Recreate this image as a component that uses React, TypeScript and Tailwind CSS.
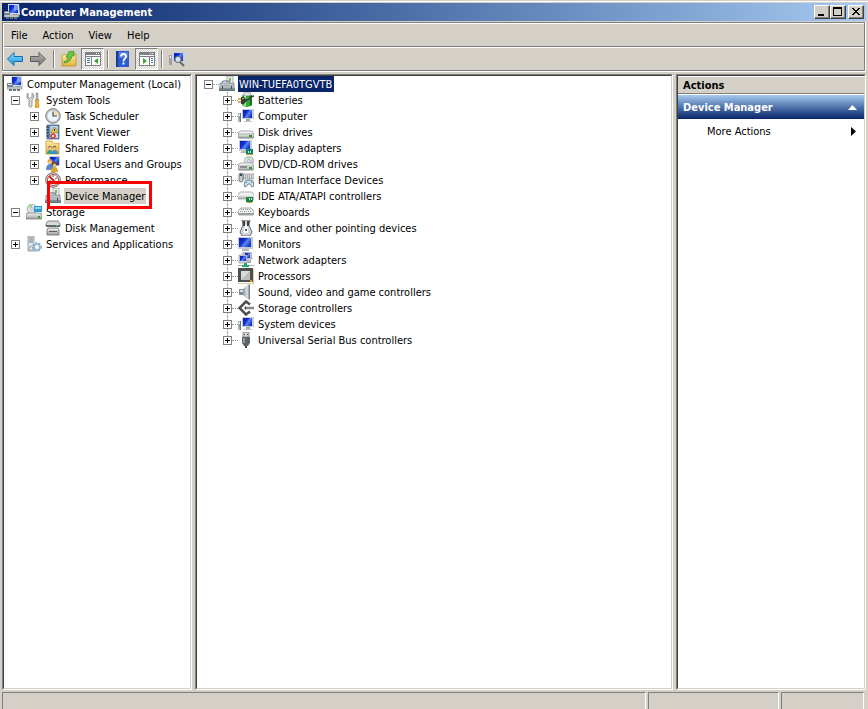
import { ReactNode } from "react";

interface TreeNode {
  id: string;
  label: string;
  icon: ReactNode;
  state?: "open" | "closed";
}

const svgProps = { width: 16, height: 16, viewBox: "0 0 16 16", "aria-hidden": true } as const;

function Gradients() {
  return (
    <svg width="0" height="0" className="absolute" aria-hidden>
      <defs>
        <linearGradient id="screen" x1="0" y1="0" x2="1" y2="0.6">
          <stop offset="0" stopColor="#0a1ba8" />
          <stop offset="0.45" stopColor="#1230d8" />
          <stop offset="0.65" stopColor="#5a86f0" />
          <stop offset="1" stopColor="#1638c8" />
        </linearGradient>
        <linearGradient id="metal" x1="0" y1="0" x2="0" y2="1">
          <stop offset="0" stopColor="#f4f4f4" />
          <stop offset="1" stopColor="#9b9ea0" />
        </linearGradient>
        <linearGradient id="darkMetal" x1="0" y1="0" x2="0" y2="1">
          <stop offset="0" stopColor="#a9b3ba" />
          <stop offset="1" stopColor="#5c6b75" />
        </linearGradient>
        <linearGradient id="arrowBlue" x1="0" y1="0" x2="0" y2="1">
          <stop offset="0" stopColor="#8fe0fb" />
          <stop offset="1" stopColor="#1490dc" />
        </linearGradient>
        <linearGradient id="arrowGray" x1="0" y1="0" x2="0" y2="1">
          <stop offset="0" stopColor="#b8b8b8" />
          <stop offset="1" stopColor="#757575" />
        </linearGradient>
        <linearGradient id="folder" x1="0" y1="0" x2="0" y2="1">
          <stop offset="0" stopColor="#fbe9a0" />
          <stop offset="1" stopColor="#e3b341" />
        </linearGradient>
        <linearGradient id="cone" x1="0" y1="0" x2="1" y2="0">
          <stop offset="0" stopColor="#8797a2" />
          <stop offset="0.6" stopColor="#dde3e7" />
          <stop offset="1" stopColor="#5f6e78" />
        </linearGradient>
      </defs>
    </svg>
  );
}

function ManagementIcon() {
  return (
    <svg {...svgProps}>
      <path d="M4 0h11l1 11H4z" fill="#d9dce0" />
      <path d="M5 1h9v8H5z" fill="url(#screen)" />
      <path d="M10 1h4v5l-4 1z" fill="#9db8f6" opacity=".6" />
      <path d="M9 10h5l1 2H8z" fill="#a4a9ae" />
      <path d="M0 7h6v4H0z" fill="#77838c" />
      <path d="M1 8h4v1H1z" fill="#e5ebee" />
      <path d="M0 11h15v2H0z" fill="#d8dcdf" stroke="#7b858c" strokeWidth=".6" />
      <path d="M2 13h3v2H2zM6 13h3v2H6zM10 13h3v2h-3z" fill="#67737b" />
    </svg>
  );
}

function ComputerIcon() {
  return (
    <svg {...svgProps}>
      <path d="M4 1h12v10H4z" fill="#c9cdd4" />
      <path d="M5 2h9v8H5z" fill="url(#screen)" />
      <path d="M8 11h4v2H8z" fill="#a7abb0" />
      <path d="M6 13h8v1H6z" fill="#c4c7ca" />
      <path d="M0 5h3v9H0z" fill="#aeb3b6" />
      <path d="M1 6h1v2H1z" fill="#fff" />
      <path d="M1 9h1v2H1z" fill="#54b848" />
      <path d="M2 5h1v9H2z" fill="#70777c" />
    </svg>
  );
}

function MonitorIcon() {
  return (
    <svg {...svgProps}>
      <path d="M0 1h15v12H0z" fill="#c6cad2" />
      <path d="M1 2h12v9H1z" fill="url(#screen)" />
      <path d="M4 13h7v2H4z" fill="#b4b8bd" />
    </svg>
  );
}

function ToolsIcon() {
  return (
    <svg {...svgProps}>
      <path d="M2 1v4l2 1.500L6 5V1l1.500 1.500v3.500L6 8v6.500q-1.500 1.500-3 0V8L1 6V2.500z" fill="#d9dcde" stroke="#7d8387" strokeWidth=".8" />
      <path d="M10 1h2v7h-2z" fill="#b9bdc0" stroke="#777" strokeWidth=".5" />
      <path d="M9 8h4l-1 2 1 5q-2 1.500-4 0l1-5z" fill="#f4b52c" stroke="#c37b10" strokeWidth=".7" />
    </svg>
  );
}

function ClockIcon() {
  return (
    <svg {...svgProps}>
      <circle cx="8" cy="8" r="7.400" fill="#b8bcc0" stroke="#777d82" strokeWidth=".8" />
      <circle cx="8" cy="8" r="5.600" fill="#eef5fb" />
      <path d="M8 8V2.400A5.600 5.600 0 0 1 13.600 8z" fill="#f6dfa6" />
      <path d="M8 3.500V8h4" fill="none" stroke="#34506f" strokeWidth="1.200" />
    </svg>
  );
}

function EventIcon() {
  return (
    <svg {...svgProps}>
      <path d="M2 1h12v14H2z" fill="#5d86b4" stroke="#3f5f86" strokeWidth=".7" />
      <path d="M5 2h8v12H5z" fill="#c5d8ea" />
      <path d="M5 4h8M5 6h8M5 8h8" stroke="#8aa9c8" strokeWidth=".7" />
      <path d="M1 3h3M1 6h3M1 9h3M1 12h3" stroke="#2f3e4f" />
      <path d="M9.500 3l3.500 5.500H6z" fill="#f9d02b" stroke="#a37c06" strokeWidth=".6" />
      <path d="M9 5h1v2H9z" fill="#222" />
      <circle cx="8" cy="12" r="2.800" fill="#d83a32" />
      <path d="M6.800 10.800l2.400 2.400M9.200 10.800l-2.400 2.400" stroke="#fff" strokeWidth=".9" />
    </svg>
  );
}

function SharedFolderIcon() {
  return (
    <svg {...svgProps}>
      <path d="M1 1h6l1 2h6v11H1z" fill="url(#folder)" stroke="#c7982e" strokeWidth=".8" />
      <path d="M8 1h5v2H8z" fill="#fff7cf" />
      <circle cx="5" cy="7.500" r="1.800" fill="#a97448" />
      <circle cx="5" cy="8.300" r="1.200" fill="#f0c79b" />
      <path d="M2 14q0-4 3-4t3 4z" fill="#3aa089" />
      <circle cx="9.500" cy="7.500" r="1.800" fill="#8a5a36" />
      <circle cx="9.500" cy="8.300" r="1.200" fill="#f0c79b" />
      <path d="M7 14q0-4 3-4t3 4z" fill="#3f8fc9" />
    </svg>
  );
}

function UsersIcon() {
  return (
    <svg {...svgProps}>
      <path d="M4 0h11v10H4z" fill="#c9cdd4" />
      <path d="M5 1h9v8H5z" fill="url(#screen)" />
      <circle cx="5" cy="5.500" r="2.500" fill="#d9a441" />
      <circle cx="5" cy="6.500" r="1.600" fill="#f2cc9f" />
      <path d="M1 14q0-6 4-6t4 6z" fill="#5a86d0" />
      <circle cx="9.500" cy="8" r="2.500" fill="#7a4620" />
      <circle cx="9.500" cy="9" r="1.600" fill="#efc08b" />
      <path d="M6 16q0-5 3.500-5t3.500 5z" fill="#e0a32a" />
    </svg>
  );
}

function PerformanceIcon() {
  return (
    <svg {...svgProps}>
      <circle cx="8" cy="8" r="7.300" fill="#d8d8d8" stroke="#6d6d6d" />
      <circle cx="8" cy="8" r="5.500" fill="#fff" stroke="#b33" strokeWidth=".9" />
      <path d="M4 4l8 8" stroke="#d3261c" strokeWidth="2" />
      <path d="M8 3v2M12 6l-2 1M4 9h2" stroke="#555" />
    </svg>
  );
}

function DeviceManagerIcon() {
  return (
    <svg {...svgProps}>
      <path d="M8 0h6v8H8z" fill="#eef0f0" stroke="#9a9fa2" strokeWidth=".8" />
      <path d="M10 2h2v3h-2z" fill="#6cb55d" />
      <path d="M3 7q0-2 2-2h4q2 0 2 2" fill="none" stroke="#59646c" />
      <path d="M1 7h14v3H1z" fill="#bfc6cb" stroke="#6c777e" strokeWidth=".6" />
      <path d="M0 10h16v5H0z" fill="url(#darkMetal)" />
      <path d="M0 11h16" stroke="#dce2e5" strokeWidth=".7" />
      <path d="M3 10h1v3H3zM12 10h1v3h-1z" fill="#3f4a52" />
    </svg>
  );
}

function StorageIcon() {
  return (
    <svg {...svgProps}>
      <circle cx="6" cy="5" r="4.800" fill="#dfe5e8" stroke="#8b9296" strokeWidth=".7" />
      <path d="M6 5L2 2q2-2 4-2z" fill="#a9cf9a" />
      <circle cx="6" cy="5" r="1.400" fill="#fff" stroke="#8b9296" strokeWidth=".6" />
      <path d="M8 2h8v6H8z" fill="#2d9bd6" />
      <path d="M9 3h6v2H9z" fill="#85d2f2" />
      <path d="M1 9h14l1 2v4H0v-4z" fill="url(#metal)" stroke="#6a6e71" strokeWidth=".7" />
      <path d="M12 12h2v2h-2z" fill="#1fa31f" />
    </svg>
  );
}

function DiskManagementIcon() {
  return (
    <svg {...svgProps}>
      <path d="M3 1h10l2 3v2H1V4z" fill="#d7dadb" stroke="#666c70" strokeWidth=".8" />
      <path d="M1 5h14v2H1z" fill="#60686c" />
      <path d="M11 5h2v1h-2z" fill="#5bd05b" />
      <path d="M3 8h10l1 2v5H2v-5z" fill="url(#metal)" stroke="#666c70" strokeWidth=".8" />
      <path d="M4 11h8v1H4z" fill="#555c60" />
    </svg>
  );
}

function ServicesIcon() {
  return (
    <svg {...svgProps}>
      <path d="M2 0h6v15H2z" fill="#e0e4e7" stroke="#89939a" strokeWidth=".8" />
      <path d="M3 2h4M3 4h4M3 6h4" stroke="#75818a" />
      <circle cx="11" cy="11" r="3" fill="#eef4f9" stroke="#8fb0cc" strokeWidth="1.500" />
      <circle cx="11" cy="11" r="4.300" fill="none" stroke="#7fa5c6" strokeWidth="1.200" strokeDasharray="1.800 1.800" />
      <circle cx="5" cy="12.500" r="2" fill="#dbe6ee" stroke="#8d9fae" strokeWidth=".9" />
    </svg>
  );
}

function BatteryIcon() {
  return (
    <svg {...svgProps}>
      <ellipse cx="9" cy="2" rx="4" ry="2" fill="#dfe3e4" stroke="#8d9396" strokeWidth=".6" />
      <path d="M4 3q5 2 10 0v10q-5 4-10 0z" fill="#2faa38" />
      <path d="M6 4h2v10H6z" fill="#9be59c" />
      <path d="M12 4l2-1v10l-2 1z" fill="#15701f" />
      <path d="M0 7h3M0 10h3" stroke="#c9a02c" strokeWidth="1.400" />
      <path d="M3 5h3l3 3.500L6 12H3z" fill="#3a3a36" />
      <path d="M8 8q4 0 4-3l4-1" fill="none" stroke="#3a3a36" strokeWidth="1.500" />
      <path d="M4 6h2v1H4z" fill="#d3b34d" />
    </svg>
  );
}

function DriveShape() {
  return (
    <>
      <path d="M2 7h12l2 3v3l-1 1H1l-1-1v-3z" fill="#f1f2f2" stroke="#9a9ea0" strokeWidth=".8" />
      <path d="M0 10h16v3l-1 1H1l-1-1z" fill="url(#metal)" stroke="#85898b" strokeWidth=".7" />
      <path d="M11 11h3v2h-3z" fill="#1fa31f" />
    </>
  );
}

function DiskIcon() {
  return (
    <svg {...svgProps}>
      <DriveShape />
    </svg>
  );
}

function DisplayIcon() {
  return (
    <svg {...svgProps}>
      <path d="M1 0h13v11H1z" fill="#c6cad2" />
      <path d="M2 1h10v8H2z" fill="url(#screen)" />
      <path d="M4 11h5v2H2z" fill="#b4b8bd" />
      <path d="M8 9h7v5H8z" fill="#16816b" />
      <path d="M10 11h1v2h-1zM12 11h1v2h-1z" fill="#bfe6d7" />
      <path d="M8 14h7v1H8z" fill="#c79a2b" />
    </svg>
  );
}

function DvdIcon() {
  return (
    <svg {...svgProps}>
      <circle cx="11" cy="5" r="4.800" fill="#dce1e4" stroke="#9ea5aa" strokeWidth=".7" />
      <path d="M11 5L8 1q3-2 5 0z" fill="#b7dcb5" />
      <path d="M11 5l4-2q1 3-1 5z" fill="#d8bfe0" />
      <circle cx="11" cy="5" r="1.400" fill="#fff" stroke="#8a9196" strokeWidth=".6" />
      <DriveShape />
      <path d="M2 11h7" stroke="#4b5154" />
    </svg>
  );
}

function HidIcon() {
  return (
    <svg {...svgProps}>
      <path d="M4 2h12v5H4z" fill="#d4d7d9" stroke="#8a8f93" strokeWidth=".7" />
      <path d="M5 4h10M5 6h10" stroke="#80868a" strokeDasharray="1 1" />
      <rect x="1" y="1" width="4" height="9" rx="2" fill="#c5cacd" stroke="#596169" strokeWidth=".8" />
      <path d="M2 2h2v2H2z" fill="#3f474d" />
      <path d="M7 9q4-2 8 0l1 5-2 1-2-3h-2l-2 3-2-1z" fill="#d2e0e8" stroke="#4e6d84" strokeWidth=".8" />
      <path d="M8 10h1v1H8zM13 10h1v1h-1z" fill="#2a71b6" />
    </svg>
  );
}

function IdeIcon() {
  return (
    <svg {...svgProps}>
      <path d="M2 4h12l2 3v4H0V7z" fill="#f1f2f2" stroke="#9a9ea0" strokeWidth=".8" />
      <path d="M0 7h16v4H0z" fill="url(#metal)" />
      <path d="M8 9h7v5H8z" fill="#178848" />
      <path d="M11 10h1v2h-1zM13 10h1v2h-1z" fill="#c4efcf" />
      <path d="M9 14h5v1H9z" fill="#c79a2b" />
    </svg>
  );
}

function KeyboardIcon() {
  return (
    <svg {...svgProps}>
      <path d="M3 4h10q3 2 3 5l-1 2H1L0 9q0-3 3-5z" fill="#f1f2f2" stroke="#909497" strokeWidth=".8" />
      <path d="M3 5.500h10M2 7.500h12" stroke="#909497" strokeDasharray="1 1" />
      <path d="M0 9h16l-1 2H1z" fill="#9a9ea1" />
    </svg>
  );
}

function MouseIcon() {
  return (
    <svg {...svgProps}>
      <path d="M4 0h8l-1 5 3 7-2 4H4l-2-4 3-7z" fill="#cfd3d6" stroke="#5a6064" strokeWidth=".9" />
      <path d="M5 1h2v5H5zM9 1h2v5H9z" fill="#3c4246" />
      <path d="M8 4q-3 5-2 9h4q1-4-2-9z" fill="#fff" />
      <path d="M7 9h2v2H7z" fill="#555b60" />
    </svg>
  );
}

function NetworkIcon() {
  return (
    <svg {...svgProps}>
      <path d="M5 0h8l1 7H5z" fill="#c9cdd4" stroke="#7e858c" strokeWidth=".6" />
      <path d="M7 1h5v5H7z" fill="url(#screen)" />
      <path d="M1 3h8v8H1z" fill="#d3d7dc" stroke="#7e858c" strokeWidth=".6" />
      <path d="M2 4h6v5H2z" fill="url(#screen)" />
      <path d="M9 8h4v3H9z" fill="#aab0b5" />
      <path d="M6 11h3v2h2v2H4v-2h2z" fill="#27a56a" />
      <path d="M0 13h4v1H0zM11 13h5v1h-5z" fill="#a9b9b2" />
    </svg>
  );
}

function ProcessorIcon() {
  return (
    <svg {...svgProps}>
      <path d="M.5 15.500h15V1" fill="none" stroke="#c99a3a" strokeDasharray="1 1" />
      <path d="M0 0h15v14H0z" fill="#4d5050" />
      <path d="M3 3h9v9H3z" fill="#b9bdbd" />
      <path d="M3 3h9l-9 9z" fill="#d9dcdc" />
      <path d="M12 12h2v2h-2z" fill="#e09b30" />
    </svg>
  );
}

function SoundIcon() {
  return (
    <svg {...svgProps}>
      <path d="M1 5h4v6H1z" fill="#7b8992" />
      <path d="M5 5l5-4.500h2v15h-2L5 11z" fill="url(#cone)" />
      <path d="M2 6h3v2H2z" fill="#dbe2e6" />
    </svg>
  );
}

function StorageControllerIcon() {
  return (
    <svg {...svgProps}>
      <path d="M12 4.500L8 1.500 1.500 8 8 14.500l4-3" fill="none" stroke="#4b4e50" strokeWidth="2.500" />
      <path d="M7 8h9" stroke="#85898c" strokeWidth="2.500" />
      <path d="M8 6l-2 2 2 2z" fill="#4b4e50" />
    </svg>
  );
}

function UsbIcon() {
  return (
    <svg {...svgProps}>
      <path d="M5 0h6v5H5z" fill="#d4d6d8" stroke="#777c80" strokeWidth=".8" />
      <path d="M6 2h1v1H6zM9 2h1v1H9z" fill="#444" />
      <path d="M4 5h8v6l-2 3H6l-2-3z" fill="#5d6367" />
      <path d="M5 6h2v5H5z" fill="#92989c" />
      <path d="M7 14h2v2H7z" fill="#3c4144" />
    </svg>
  );
}

function ArrowIcon({ forward = false }: { forward?: boolean }) {
  return (
    <svg {...svgProps}>
      <path
        d={forward ? "M15.500 8L9 1.500v4H.5v5H9v4z" : "M.5 8L7 1.500v4h8.500v5H7v4z"}
        fill={forward ? "url(#arrowGray)" : "url(#arrowBlue)"}
        stroke={forward ? "#5e5e5e" : "#1b6eae"}
      />
    </svg>
  );
}

function UpFolderIcon() {
  return (
    <svg {...svgProps}>
      <path d="M1 4h6l1-1h7v12H1z" fill="url(#folder)" stroke="#bd942f" strokeWidth=".8" />
      <path d="M2 5h12" stroke="#fff3bd" />
      <path d="M3 11q4-1 4-5H5l3-5.500h5V5h-2q-1 6-8 7z" fill="#6cc644" stroke="#2c8416" strokeWidth=".6" />
    </svg>
  );
}

function PaneIcon({ right = false }: { right?: boolean }) {
  return (
    <svg {...svgProps} shapeRendering="crispEdges">
      <path d="M0 1h16v14H0z" fill="#7c8186" />
      <path d="M1 4h14v1H1zM1 6h14v8H1z" fill="#fff" />
      <path d="M11 2h1v1h-1zM13 2h1v1h-1z" fill="#fff" />
      <path d={right ? "M10 6h1v8h-1z" : "M6 6h1v8H6z"} fill="#7c8186" />
      <path
        d={right ? "M12 7h2v1h-2zM12 9h2v1h-2zM12 11h2v1h-2z" : "M2 7h3v1H2zM2 9h3v1H2zM2 11h3v1H2z"}
        fill="#3b77b8"
      />
      <path d={right ? "M4 7l4 3-4 3z" : "M13 7l-4 3 4 3z"} fill="#37a72c" shapeRendering="auto" />
    </svg>
  );
}

function HelpIcon() {
  return (
    <svg {...svgProps}>
      <path d="M1 0h13v16H1z" fill="#2c5bd0" />
      <path d="M1 0h2v16H1z" fill="#173a93" />
      <path d="M4 1h9v6H4z" fill="#517fe4" />
      <path d="M6 5.500Q6 3 8.500 3T11 5.500Q11 7 9.500 8q-1 .6-1 2.500" fill="none" stroke="#fff" strokeWidth="1.800" />
      <path d="M7.500 11.500h2v2h-2z" fill="#fff" />
    </svg>
  );
}

function ScanIcon() {
  return (
    <svg {...svgProps}>
      <path d="M4 1h12v10H4z" fill="#c9cdd4" />
      <path d="M5 2h9v8H5z" fill="url(#screen)" />
      <path d="M0 4h3v10H0z" fill="#9ba1a5" />
      <path d="M1 5h1v2H1z" fill="#fff" />
      <circle cx="9" cy="8.500" r="3" fill="#d6e6f4" stroke="#71777c" strokeWidth="1.200" />
      <path d="M11 11l4 4" stroke="#62676b" strokeWidth="2" />
    </svg>
  );
}

const CONSOLE_TREE: (TreeNode & { depth: 0 | 1 | 2 })[] = [
  { id: "root", depth: 0, label: "Computer Management (Local)", icon: <ManagementIcon /> },
  { id: "tools", depth: 1, label: "System Tools", icon: <ToolsIcon />, state: "open" },
  { id: "tasks", depth: 2, label: "Task Scheduler", icon: <ClockIcon />, state: "closed" },
  { id: "events", depth: 2, label: "Event Viewer", icon: <EventIcon />, state: "closed" },
  { id: "shared", depth: 2, label: "Shared Folders", icon: <SharedFolderIcon />, state: "closed" },
  { id: "users", depth: 2, label: "Local Users and Groups", icon: <UsersIcon />, state: "closed" },
  { id: "perf", depth: 2, label: "Performance", icon: <PerformanceIcon />, state: "closed" },
  { id: "devices", depth: 2, label: "Device Manager", icon: <DeviceManagerIcon /> },
  { id: "storage", depth: 1, label: "Storage", icon: <StorageIcon />, state: "open" },
  { id: "disks", depth: 2, label: "Disk Management", icon: <DiskManagementIcon /> },
  { id: "services", depth: 1, label: "Services and Applications", icon: <ServicesIcon />, state: "closed" },
];

const DEVICES: TreeNode[] = [
  { id: "batteries", label: "Batteries", icon: <BatteryIcon /> },
  { id: "computer", label: "Computer", icon: <ComputerIcon /> },
  { id: "disk", label: "Disk drives", icon: <DiskIcon /> },
  { id: "display", label: "Display adapters", icon: <DisplayIcon /> },
  { id: "dvd", label: "DVD/CD-ROM drives", icon: <DvdIcon /> },
  { id: "hid", label: "Human Interface Devices", icon: <HidIcon /> },
  { id: "ide", label: "IDE ATA/ATAPI controllers", icon: <IdeIcon /> },
  { id: "keyboards", label: "Keyboards", icon: <KeyboardIcon /> },
  { id: "mice", label: "Mice and other pointing devices", icon: <MouseIcon /> },
  { id: "monitors", label: "Monitors", icon: <MonitorIcon /> },
  { id: "network", label: "Network adapters", icon: <NetworkIcon /> },
  { id: "processors", label: "Processors", icon: <ProcessorIcon /> },
  { id: "sound", label: "Sound, video and game controllers", icon: <SoundIcon /> },
  { id: "storagectl", label: "Storage controllers", icon: <StorageControllerIcon /> },
  { id: "system", label: "System devices", icon: <ComputerIcon /> },
  { id: "usb", label: "Universal Serial Bus controllers", icon: <UsbIcon /> },
];

const DEPTH_PADDING = {
  0: "pl-[3px]",
  1: "pl-[7px]",
  2: "pl-[26px]",
};

function Expander({ state, label }: { state: "open" | "closed"; label: string }) {
  return (
    <button type="button" aria-label={label} aria-expanded={state === "open"} className="block h-[9px] w-[9px] shrink-0">
      <svg width="9" height="9" viewBox="0 0 9 9" shapeRendering="crispEdges" aria-hidden>
        <path d="M0 0h9v9H0z" fill="#808080" />
        <path d="M1 1h7v7H1z" fill="#fff" />
        <path d={state === "open" ? "M2 4h5v1H2z" : "M2 4h5v1H2zM4 2h1v5H4z"} fill="#000" />
      </svg>
    </button>
  );
}

function ConsoleTree() {
  return (
    <ul>
      {CONSOLE_TREE.map((node) => (
        <li key={node.id} className={`relative flex h-4 items-center ${DEPTH_PADDING[node.depth]}`}>
          {node.depth > 0 && (
            <span className="mr-[6px] w-[9px] shrink-0">
              {node.state && <Expander state={node.state} label={node.label} />}
            </span>
          )}
          <button type="button" className="flex h-4 items-center gap-[3px]">
            {node.icon}
            <span className={`h-4 px-px leading-[18px] ${node.id === "devices" ? "bg-[#d4d0c8]" : ""}`}>
              {node.label}
            </span>
          </button>
          {node.id === "devices" && (
            <span className="pointer-events-none absolute -top-[7px] left-[43px] z-10 h-7 w-[105px] border-[3px] border-[#ff0000]" />
          )}
        </li>
      ))}
    </ul>
  );
}

function DeviceTree() {
  return (
    <div>
      <div className="flex h-4 items-center pl-[7px]">
        <Expander state="open" label="WIN-TUEFA0TGVTB" />
        <span className="w-[6px] border-t border-dotted border-[#a0a0a0]" />
        <button type="button" className="flex h-4 items-center gap-[3px]">
          <DeviceManagerIcon />
          <span className="h-4 bg-[#0a246a] px-px pr-[2px] leading-[18px] text-white">WIN-TUEFA0TGVTB</span>
        </button>
      </div>
      <ul>
        {DEVICES.map((device, i) => (
          <li key={device.id} className="flex h-4 items-center pl-[26px]">
            <span className="flex h-4 w-[9px] flex-col items-center">
              <span className="h-1 border-l border-dotted border-[#a0a0a0]" />
              <Expander state="closed" label={device.label} />
              {i < DEVICES.length - 1 && <span className="h-[3px] border-l border-dotted border-[#a0a0a0]" />}
            </span>
            <span className="w-[6px] border-t border-dotted border-[#a0a0a0]" />
            <button type="button" className="flex h-4 items-center gap-[3px]">
              {device.icon}
              <span className="h-4 px-px leading-[18px]">{device.label}</span>
            </button>
          </li>
        ))}
      </ul>
    </div>
  );
}

function CaptionButton({ label, children }: { label: string; children: ReactNode }) {
  return (
    <button
      type="button"
      aria-label={label}
      className="h-[14px] w-4 border border-t-white border-r-[#404040] border-b-[#404040] border-l-white bg-[#d4d0c8]"
    >
      <svg width="14" height="12" viewBox="0 0 14 12" shapeRendering="crispEdges" aria-hidden>
        <path d="M13.500 0v11.500H0" fill="none" stroke="#808080" />
        {children}
      </svg>
    </button>
  );
}

function ToolButton({ label, pressed = false, children }: { label: string; pressed?: boolean; children: ReactNode }) {
  return (
    <button
      type="button"
      aria-label={label}
      className={`flex h-[22px] w-[23px] items-center pl-[3px] ${
        pressed
          ? "border border-t-[#808080] border-r-white border-b-white border-l-[#808080] bg-[repeating-conic-gradient(#fff_0_25%,#d4d0c8_0_50%)] bg-[length:2px_2px]"
          : ""
      }`}
    >
      {children}
    </button>
  );
}

function ToolSeparator() {
  return (
    <span className="flex w-2 justify-center">
      <span className="h-[18px] w-[2px] border-l border-r border-l-[#808080] border-r-white" />
    </span>
  );
}

function Panel({ className, children }: { className: string; children: ReactNode }) {
  return (
    <div className={`border border-t-[#808080] border-r-white border-b-white border-l-[#808080] ${className}`}>
      <div className="h-full border border-t-[#404040] border-r-[#d4d0c8] border-b-[#d4d0c8] border-l-[#404040] bg-white">
        {children}
      </div>
    </div>
  );
}

export default function App() {
  return (
    <div className="flex h-screen flex-col overflow-hidden bg-[#d4d0c8] font-['Tahoma','DejaVu_Sans_Condensed','DejaVu_Sans',sans-serif] text-[11px] leading-4 whitespace-nowrap text-black">
      <Gradients />
      <div className="mt-px h-[2px] border-t border-white" />

      <header className="mx-[2px]">
        <div className="flex h-[18px] items-center bg-linear-to-r from-[#0a246a] to-[#a6caf0] pr-[2px] pl-[2px]">
          <ManagementIcon />
          <h1 className="ml-px flex-1 pt-[2px] font-bold text-white">Computer Management</h1>
          <div className="flex">
            <CaptionButton label="Minimize">
              <path d="M3 8h6v2H3z" />
            </CaptionButton>
            <CaptionButton label="Maximize">
              <path d="M2 1h9v9H2zM3 3v6h7V3z" fillRule="evenodd" />
            </CaptionButton>
            <span className="w-[2px]" />
            <CaptionButton label="Close">
              <path d="M3 2h2v1h1v1h2V3h1V2h2v1h-1v1H9v1H8v1h1v1h1v1h1v1H9V8H8V7H6v1H5v1H3V8h1V7h1V6h1V5H5V4H4V3H3z" />
            </CaptionButton>
          </div>
        </div>

        <div className="mt-px border-r border-b border-white">
          <div className="border border-[#808080]">
            <div className="border-t border-l border-white">
              <nav className="flex h-[23px] items-center gap-px border-b border-[#808080] pt-[2px]">
                <button type="button" className="px-[7px]">File</button>
                <button type="button" className="px-[7px]">Action</button>
                <button type="button" className="px-[7px]">View</button>
                <button type="button" className="px-[7px]">Help</button>
              </nav>
              <div className="flex items-center border-t border-white">
                <ToolButton label="Back"><ArrowIcon /></ToolButton>
                <ToolButton label="Forward"><ArrowIcon forward /></ToolButton>
                <ToolSeparator />
                <ToolButton label="Up one level"><UpFolderIcon /></ToolButton>
                <ToolButton label="Show/Hide Console Tree" pressed><PaneIcon /></ToolButton>
                <ToolSeparator />
                <ToolButton label="Help"><HelpIcon /></ToolButton>
                <ToolButton label="Show/Hide Action Pane" pressed><PaneIcon right /></ToolButton>
                <ToolSeparator />
                <ToolButton label="Scan for hardware changes"><ScanIcon /></ToolButton>
              </div>
            </div>
          </div>
        </div>
      </header>

      <main className="mx-[2px] my-[2px] flex min-h-0 flex-1 gap-[3px]">
        <Panel className="w-[190px] shrink-0">
          <ConsoleTree />
        </Panel>
        <Panel className="min-w-0 flex-1">
          <DeviceTree />
        </Panel>
        <Panel className="w-[190px] shrink-0">
          <h2 className="flex h-[18px] items-center border-t border-b border-t-white border-b-[#808080] bg-[#d4d0c8] pt-[2px] pl-[5px] font-bold">
            Actions
          </h2>
          <button
            type="button"
            className="flex h-[25px] w-full items-center justify-between border-t border-white bg-linear-to-b from-[#a6caf0] to-[#0a246a] pr-[7px] pl-[5px] font-bold text-white"
          >
            <span className="pt-[2px]">Device Manager</span>
            <svg width="9" height="5" viewBox="0 0 9 5" aria-hidden>
              <path d="M4.500 0L9 5H0z" fill="#fff" />
            </svg>
          </button>
          <button type="button" className="flex h-6 w-full items-center justify-between pr-2 pl-[29px]">
            <span className="pt-[2px]">More Actions</span>
            <svg width="5" height="9" viewBox="0 0 5 9" aria-hidden>
              <path d="M0 0l5 4.500L0 9z" />
            </svg>
          </button>
        </Panel>
      </main>

      <footer className="mr-1 ml-[2px] flex h-[17px] gap-[2px]">
        <div className="flex-1 border-t border-r border-l border-t-[#808080] border-r-white border-l-[#808080]" />
        <div className="w-[131px] border-t border-r border-l border-t-[#808080] border-r-white border-l-[#808080]" />
        <div className="w-[83px] border-t border-r border-l border-t-[#808080] border-r-white border-l-[#808080]" />
      </footer>
    </div>
  );
}
